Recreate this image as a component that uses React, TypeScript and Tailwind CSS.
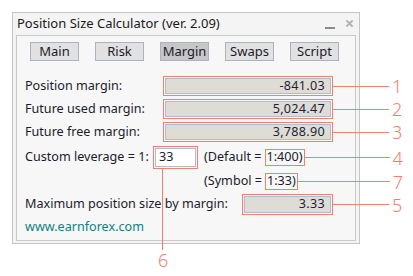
import React from "react";

const tabs = ["Main", "Risk", "Margin", "Swaps", "Script"];

const Mark = ({ n, line }: { n: string; line: number }) => (
  <span className="absolute left-full top-1/2 -translate-y-1/2 flex items-center">
    <span className="h-px bg-[#f3806f]" style={{ width: line }} />
    <span className="ml-[3px] text-[18px] leading-[14px] font-light text-[#f3806f]">{n}</span>
  </span>
);

const ValueField = ({ value, w, n, line }: { value: string; w: string; n: string; line: number }) => (
  <div className={`relative ${w} h-full border border-[#f3806f] p-px`}>
    <div className="h-full border border-[#b4bccb] bg-[#deddd5] flex items-center justify-end pr-[5px] text-[#1e1e3a] tracking-[0.3px]">
      {value}
    </div>
    <Mark n={n} line={line} />
  </div>
);

const App = () => {
  return (
    <div className="relative w-[413px] h-[276px] bg-white pt-[12px] pl-[12px] font-['Noto_Sans',sans-serif] text-[12.6px] text-[#1b1b2b]">
      <div className="w-[348px] h-[232px] border border-[#c6c6c6] bg-[#f4f4f4] flex flex-col">
        <div className="h-[22px] flex items-center pl-[4px] pr-[6px]">
          <span className="flex-1 text-[13px] text-[#1a1a1a]">Position Size Calculator (ver. 2.09)</span>
          <span className="w-[10px] h-[2px] bg-[#8a8a8a] mt-[7px] mr-[11px]" />
          <svg width="7" height="7" viewBox="0 0 7 7" className="mb-[1px]">
            <path d="M1 1L6 6M6 1L1 6" stroke="#b2b2b2" strokeWidth="1.8" strokeLinecap="square" />
          </svg>
        </div>
        <div className="flex-1 mx-[3px] mb-[2px] border border-[#c9c9c9] bg-[#f7f7f7] flex flex-col">
          <div className="flex gap-[16px] pl-[13px] pt-[6px]">
            {tabs.map((t) => (
              <div
                key={t}
                className={`w-[49px] h-[19px] border border-[#a9b3c2] flex items-center justify-center text-[13px] ${
                  t === "Margin" ? "bg-[#c7c7c7]" : "bg-[#e1e1e1]"
                }`}
              >
                {t}
              </div>
            ))}
          </div>

          <div className="mt-[15px] pl-[8px] flex flex-col">
            {[
              ["Position margin:", "-841.03", "1"],
              ["Future used margin:", "5,024.47", "2"],
              ["Future free margin:", "3,788.90", "3"],
            ].map(([label, value, n], i) => (
              <div key={n} className={`flex items-center h-[20px] ${i > 0 ? "mt-[3px]" : ""}`}>
                <span className="w-[138px]">{label}</span>
                <ValueField value={value} w="w-[170px]" n={n} line={57} />
              </div>
            ))}

            <div className="flex items-center h-[23px] mt-[4px]">
              <span className="w-[128px]">Custom leverage = 1:</span>
              <div className="relative w-[45px] h-full border border-[#f3806f] p-px">
                <div className="h-full border border-[#b4bccb] bg-white flex items-center pl-[3px]">33</div>
                <span className="absolute left-[8px] top-full w-px h-[82px] bg-[#f3806f]" />
                <span className="absolute left-[4px] top-[106px] text-[18px] leading-[14px] font-light text-[#f3806f]">6</span>
              </div>
              <span className="ml-[6px]">(Default =</span>
              <span className="relative ml-[3px] h-[17px] border border-[#f3806f] px-[1px] flex items-center">
                1:400)
                <Mark n="4" line={86} />
              </span>
            </div>

            <div className="flex items-center h-[19px] mt-[3px] pl-[179px]">
              <span>(Symbol =</span>
              <span className="relative ml-[3px] h-[17px] border border-[#f3806f] px-[1px] flex items-center">
                1:33)
                <Mark n="7" line={93} />
              </span>
            </div>

            <div className="flex items-center h-[21px] mt-[3px]">
              <span className="w-[217px]">Maximum position size by margin:</span>
              <ValueField value="3.33" w="w-[91px]" n="5" line={57} />
            </div>

            <div className="mt-[4px] h-[16px] flex items-center text-[#108080]">www.earnforex.com</div>
          </div>
        </div>
      </div>
    </div>
  );
};

export default App;
